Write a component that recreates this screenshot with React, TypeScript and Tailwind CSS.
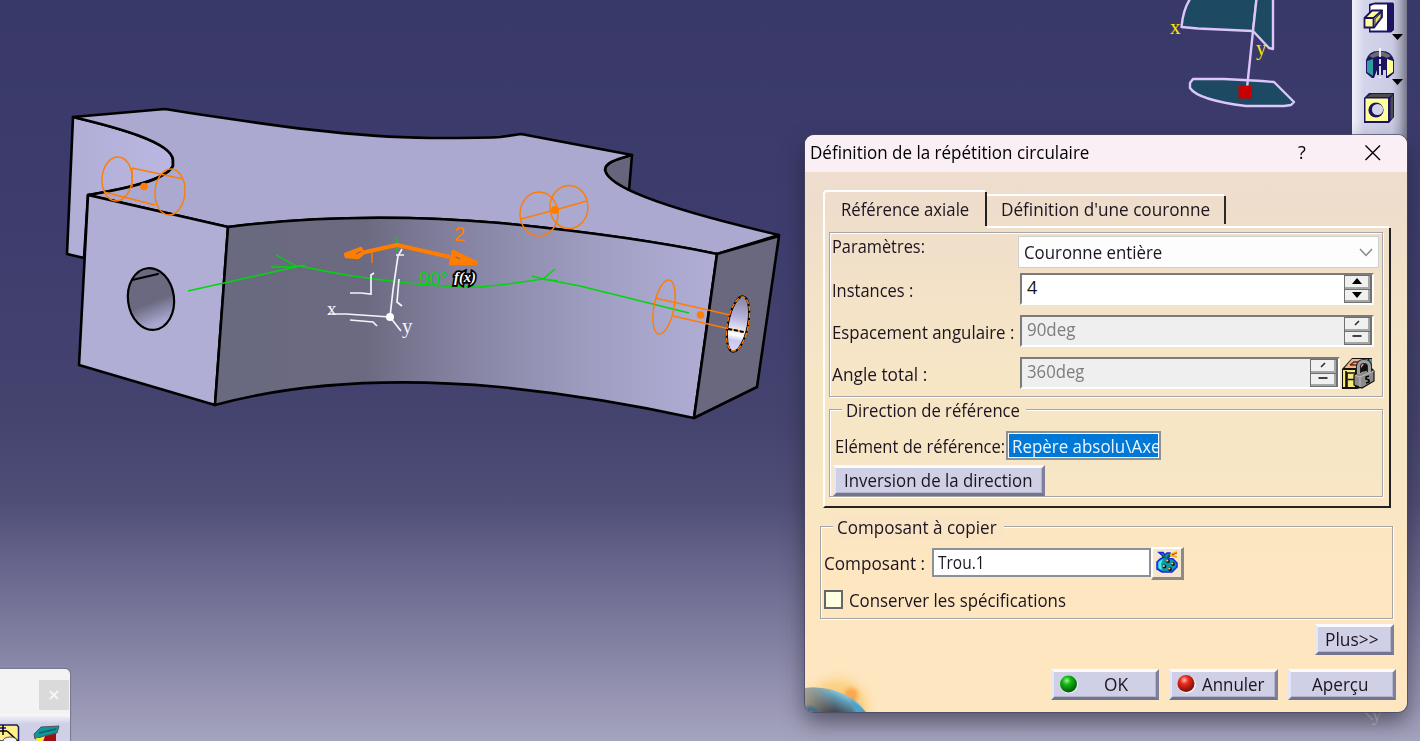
import type { ReactNode } from "react";

function T({ children, className = "" }: { children: ReactNode; className?: string }) {
  return (
    <span className={"inline-block origin-left whitespace-pre text-[18px] leading-[24px] " + className}>{children}</span>
  );
}

const ETCHED = "border border-[#a6a6a8] shadow-[1px_1px_0_#fff,inset_1px_1px_0_#fff]";

function SceneView() {
  return (
    <svg className="absolute inset-0" width="1420" height="741" viewBox="0 0 1420 741" fill="none">
      <defs>
        <linearGradient id="front" gradientUnits="userSpaceOnUse" x1="215" y1="0" x2="717" y2="0">
          <stop offset="0" stopColor="#69697f" />
          <stop offset="0.3" stopColor="#6b6a81" />
          <stop offset="0.42" stopColor="#7c7a96" />
          <stop offset="0.6" stopColor="#918fb0" />
          <stop offset="0.8" stopColor="#a3a1c5" />
          <stop offset="1" stopColor="#b0aed6" />
        </linearGradient>
        <linearGradient id="bore" x1="0.4" y1="0" x2="0.6" y2="1">
          <stop offset="0.55" stopColor="#6a6980" />
          <stop offset="0.9" stopColor="#a9a7cf" />
        </linearGradient>
        <linearGradient id="boreR" x1="0" y1="0" x2="0" y2="1">
          <stop offset="0" stopColor="#85839f" />
          <stop offset="0.4" stopColor="#b8b5df" />
          <stop offset="0.7" stopColor="#ffffff" />
          <stop offset="0.8" stopColor="#c9c6ee" />
          <stop offset="1" stopColor="#dcdaf8" />
        </linearGradient>
        <linearGradient id="side" x1="0" y1="0" x2="1" y2="0">
          <stop offset="0" stopColor="#b0aed5" />
          <stop offset="1" stopColor="#bab7e2" />
        </linearGradient>
      </defs>

      <g stroke="#000" strokeWidth="2.6" strokeLinejoin="round" strokeLinecap="round">
        <path fill="url(#side)" d="M73 117C115 127 172 142 173 160V166Q165 182 88 195L84 258L67 254Z" />
        <path fill="#66657c" d="M632 155C615 159 605 163 605 170C607 178 616 185 629 191Z" />
        <path fill="#aba9cf" d="M73 117L165 109L190 113C270 125 350 137 430 138C465 138 490 138 500 137L521 134L632 155C614 160 605 163 605 170C608 185 650 205 779 235L717 254C650 240 580 231 500 223C430 217 330 214 228 227L88 195C130 188 165 180 173 166V160C172 142 115 127 73 117Z" />
        <path fill="#b0aed5" d="M88 195L228 227L215 405L79 365Z" />
        <path fill="url(#front)" d="M228 227C330 214 430 217 500 223C580 231 650 240 717 254L694 418C630 404 570 394 500 387C400 378 300 382 215 405Z" />
        <path fill="#69687f" d="M717 254L779 236L757 387L694 418Z" />
        <ellipse cx="151" cy="299" rx="23" ry="31" transform="rotate(-7 151 299)" fill="url(#bore)" strokeWidth="2.2" />
        <path d="M132 280L158 274" strokeWidth="2.2" />
        <ellipse cx="738" cy="324" rx="10" ry="28" transform="rotate(11 738 324)" fill="url(#boreR)" strokeWidth="2.2" />
      </g>

      <g stroke="#00d60c" strokeWidth="1.4">
        <path d="M188 291L224 283L300 266C340 275 370 279 400 282C430 286 455 287 480 287L508 284L543 279L580 286L689 313" />
        <path d="M276 255L296 266M271 267H290L305 265.500M532 276L543 279L555 269M543 279L558 281" />
        <path d="M397 238V252" />
      </g>

      <g stroke="#ff7d00" strokeWidth="1.4">
        <ellipse cx="117" cy="179" rx="15" ry="22" transform="rotate(4 117 179)" />
        <ellipse cx="170" cy="192" rx="15" ry="23" transform="rotate(4 170 192)" />
        <path d="M132 168V187M132 168L183 179M104 192L155 205" />
        <ellipse cx="539" cy="214" rx="19" ry="22" />
        <ellipse cx="569" cy="207" rx="19" ry="21.500" />
        <path d="M521 219L555 210L587 201" />
        <ellipse cx="664" cy="307" rx="10" ry="27.500" transform="rotate(11 664 307)" />
        <path d="M655 298L730 315M673 316L743 332" />
        <ellipse cx="738" cy="324" rx="10.500" ry="27.500" transform="rotate(11 738 324)" strokeDasharray="5 2" />
        <path d="M728 329L744 332" stroke="#000" strokeDasharray="4 2" strokeWidth="2" />
        <path d="M372 250V263" />
      </g>
      <g fill="#ff7d00">
        <circle cx="144" cy="186.500" r="3.800" />
        <circle cx="555" cy="210" r="4" />
        <circle cx="700.500" cy="315" r="3.800" />
      </g>
      <g stroke="#ff7d00" strokeLinejoin="round">
        <path d="M361 253L397 245L450 257" strokeWidth="4" />
        <path d="M346 257L345 254L361 248L363 254L358 258Z" strokeWidth="2.500" fill="#ff7d00" />
        <path d="M453 251L476 262V264H450Z" strokeWidth="2.500" fill="#ff7d00" />
        <path d="M356 254L361 251.500M456 257L460 259" stroke="#6d6c84" strokeWidth="1.300" />
      </g>

      <g stroke="#f4f4fa" strokeWidth="1.700">
        <path d="M390 317L393 290L398 256L402 249M396 255H404" />
        <path d="M328 314H346L390 317L401 331" />
        <path d="M350 293H361L371 294V275L374 273M350 320L373 322L377 326M399 279L397 302L402 306" />
      </g>
      <circle cx="390" cy="317" r="4" fill="#fff" />
      <g fontFamily="'Liberation Sans', sans-serif">
        <text x="454" y="241" fontSize="20" fill="#ff7d00">2</text>
        <text x="419" y="285" fontSize="19" fill="#00d60c">90°</text>
      </g>
      <g fontFamily="'Liberation Serif', serif" fill="#f4f4fa">
        <text x="327" y="315" fontSize="19">x</text>
        <text x="402" y="333" fontSize="21">y</text>
        <text x="1372" y="721" fontSize="19" fill="#c8c8ce">y</text>
      </g>
      <path d="M1365 712L1373 720" stroke="#c8c8ce" strokeWidth="1.400" />
      <text x="454" y="282" fontSize="15" fontWeight="bold" fontStyle="italic" fontFamily="'Liberation Serif', serif" fill="#fff" stroke="#000" strokeWidth="3.600" paintOrder="stroke" textLength="22" lengthAdjust="spacingAndGlyphs">f(x)</text>

      <g stroke="#dcc6fa" strokeWidth="2.400" fill="#1d4a62" strokeLinejoin="round">
        <path d="M1190 -1Q1183 10 1181.500 27L1198 28.500L1253 31L1256.500 -1" />
        <path d="M1256.500 -1L1253 31L1269 48L1273 49V-1" />
        <path d="M1193 79L1224 79L1262 81L1274 82L1294 102L1291 105L1284 106H1246Q1198 100 1190 88V83Z" />
        <path d="M1253 31L1247 88" />
      </g>
      <rect x="1238.500" y="85.500" width="13.500" height="13" fill="#c80000" />
      <g fontFamily="'Liberation Serif', serif" fill="#ffe400" fontSize="21">
        <text x="1170" y="34">x</text>
        <text x="1256" y="55">y</text>
      </g>
    </svg>
  );
}

function RightToolbar() {
  return (
    <div className="absolute left-[1352px] top-0 h-[140px] w-[55px] bg-[linear-gradient(90deg,#f2f2f8_0,#d4d4ea_12px,#cbcbe4_40px,#b0b0c4_47px,#77778c_55px)]">
      <svg width="55" height="140" viewBox="0 0 55 140">
        <path d="M17 4L23 2.500H41L42 4V30L39 32.500H17Z" fill="#1c1460" />
        <path d="M18.500 6L22 4.500H35V30.500H18.500Z" fill="#fff" />
        <path d="M12.500 18L20 10.500H30V17L22 27.500H12.500Z" fill="#ffff9a" stroke="#1c1460" strokeWidth="1.800" />
        <path d="M12.500 18H21.500V27M21.500 18L29.500 11" stroke="#1c1460" strokeWidth="1.800" fill="none" />
        <path d="M23 19L29 13V17L23 25Z" fill="#e4e06a" stroke="#1c1460" strokeWidth="0.800" />
        <path d="M40 34H51L45.500 40Z" fill="#000" />
        <path d="M14 60Q17 50 28 51Q39 50 42 60V73L36 78H34V70H31V75H25V70L22 78H20L14 73Z" fill="#1c1460" />
        <path d="M17 56Q28 47 39 56L35 58Q28 54 21 58Z" fill="#6b6b70" />
        <path d="M15 61L21 59V76L15 72Z" fill="#2f9d9e" />
        <path d="M35 59L41 61V72L35 76Z" fill="#ffff9a" />
        <path d="M28 48V78" stroke="#fff" strokeWidth="1.700" strokeDasharray="9 2 5 2" />
        <path d="M40 79H51L45.500 85Z" fill="#000" />
        <path d="M12 98L17 93H42V117L37 123H12Z" fill="#1c1460" />
        <path d="M15 97L19 94H41L37 97Z" fill="#4d4d50" />
        <path d="M38.500 98L41 95V117L38.500 120Z" fill="#4d4d50" />
        <path d="M13.500 98.500H36V121H13.500Z" fill="#ffff9a" />
        <circle cx="24" cy="110" r="7.600" fill="#1c1460" />
        <circle cx="25.500" cy="109.500" r="5.600" fill="#d3d3ea" />
      </svg>
    </div>
  );
}

function FloatingPalette() {
  return (
    <div className="absolute left-0 top-[669px] flex h-[80px] w-[70px] flex-col overflow-hidden rounded-tr-[5px] bg-[#f3f3f3] shadow-[0_0_1px_1px_#77778e]">
      <div className="flex h-[45px] justify-end pr-px pt-[11px]">
        <div className="flex h-[30px] w-[30px] items-center justify-center bg-[#dadada]">
          <svg width="10" height="10" viewBox="0 0 10 10"><path d="M1 1L9 9M9 1L1 9" stroke="#f6f6f6" strokeWidth="2" /></svg>
        </div>
      </div>
      <div className="h-[35px] bg-[linear-gradient(#fafafc,#cfcfe6_10px)]">
        <svg width="70" height="35" viewBox="0 714 70 35">
          <path d="M-2 725H17L18.500 727V741H-2Z" fill="#ffef86" stroke="#1b1b6b" strokeWidth="1.500" />
          <path d="M0 728H6" stroke="#1414d8" strokeWidth="1.500" />
          <path d="M3 725V735M0 731H7M7 731L18 741" stroke="#000" strokeWidth="1.500" />
          <ellipse cx="10" cy="741" rx="7" ry="4" fill="#f3f3f3" stroke="#555" />
          <path d="M45 736L56 732V742H43Z" fill="#a00f0f" />
          <path d="M34 734L41 727L59 726L57 733L44 736L35 739Z" fill="#10959b" stroke="#555" strokeWidth="1" />
          <path d="M36 738H44L41 742H38Z" fill="#ffef22" />
          <path d="M39 733L56 729" stroke="#0d5f66" strokeWidth="1.500" />
        </svg>
      </div>
    </div>
  );
}

function Spinner({ disabled = false }: { disabled?: boolean }) {
  const cell = "flex h-[13px] w-[25px] items-center justify-center border-b-2 border-r-2 border-[#a6a6a6] bg-[#f0f0f0]";
  return (
    <div className="flex h-[28px] w-[28px] flex-col gap-px border border-[#707070] bg-[#707070] shadow-[inset_-1px_-1px_0_#707070]">
      <div className={cell}>
        <svg width="12" height="8" viewBox="0 0 12 8">
          {disabled ? <path d="M4 6L8 2" stroke="#222" strokeWidth="1.500" /> : <path d="M1 7L6 1L11 7Z" fill="#000" />}
        </svg>
      </div>
      <div className={cell}>
        <svg width="12" height="8" viewBox="0 0 12 8">
          {disabled ? <path d="M1.500 3H10.500" stroke="#222" strokeWidth="1.700" /> : <path d="M1 1H11L6 7Z" fill="#000" />}
        </svg>
      </div>
    </div>
  );
}

function NumberField({ value, width, disabled = false, scale }: { value: string; width: string; disabled?: boolean; scale: string }) {
  return (
    <div className={"flex h-[32px] justify-between border-2 border-b-white border-l-[#7b7b7b] border-r-white border-t-[#7b7b7b] " + width + (disabled ? " bg-[#efefef] text-[#7d7d7d]" : " bg-white")}>
      <div className="pl-[5px]"><T className={scale}>{value}</T></div>
      <Spinner disabled={disabled} />
    </div>
  );
}

function Bevel({ className = "", children }: { className?: string; children: ReactNode }) {
  return (
    <div className={"flex h-[31px] border-[3px] border-b-[#74748f] border-l-[#e6e6fa] border-r-[#80809c] border-t-[#fbfbff] bg-[#cfcfe5] shadow-[inset_-1px_-1px_0_#b4b4cd] " + className}>
      {children}
    </div>
  );
}

function LockIcon() {
  return (
    <svg width="34" height="33" viewBox="0 0 34 33">
      <path d="M1 12L11 1H31V20L20 31L16 32H1Z" fill="#111" />
      <path d="M2 13H14V30H2Z" fill="#f7ea7c" />
      <path d="M3.500 11L11 2H27L20 11Z" fill="#f2b48f" />
      <path d="M9 8L13 5H22M9 8H17" stroke="#5b2b1a" strokeWidth="1.500" fill="none" />
      <path d="M5 14V30M14 16H6V30M7 22.500H13" stroke="#111" strokeWidth="1.600" fill="none" />
      <path d="M28 2H31V8L28 5Z" fill="#24a7b8" />
      <path d="M13 18L18 15L31 12L33 14V24L21 31L13 28Z" fill="#8b8b8b" stroke="#111" strokeWidth="1.200" />
      <path d="M17.500 16V9Q18 4.500 23 4.500Q28 4.500 28.500 9V15" fill="none" stroke="#222" strokeWidth="5" />
      <path d="M17.500 17V9Q18 4.500 23 4.500Q28 4.500 28.500 9V15" fill="none" stroke="#9f9f9f" strokeWidth="3" />
      <path d="M14 18.500L19 20L33 14M19 20V30" stroke="#bdbdbd" strokeWidth="1" fill="none" />
      <path d="M28 19L25 20V22L28 23V25L25 26" stroke="#000" strokeWidth="1.500" fill="none" />
    </svg>
  );
}

function BagIcon() {
  return (
    <svg width="24" height="24" viewBox="0 0 24 24">
      <path d="M4 1.500H8L10 4L12 2H15V5L13 7L18 8L22 12V16L17 21H7L2 18V11L5 8L9 6Z" fill="#0d9aa6" stroke="#1226e8" strokeWidth="1.500" />
      <path d="M3.500 11L8 8L6 13L7 19L3.500 17Z" fill="#4fe6fa" />
      <path d="M15 4L22 1M15 4L22 6" stroke="#f2b40a" strokeWidth="2" />
      <path d="M17 4L22 2" stroke="#d42a0a" strokeWidth="1" />
      <path d="M7 5L11 7M14 4L12 7" stroke="#1f5f16" strokeWidth="1.500" />
      <g fill="#111">
        <circle cx="13" cy="10" r="1.900" /><circle cx="18" cy="13" r="1.900" /><circle cx="9.500" cy="15.500" r="1.900" /><circle cx="15" cy="18" r="1.900" />
      </g>
      <g fill="#f3c89c">
        <circle cx="12.300" cy="9.500" r="1.100" /><circle cx="17.300" cy="12.500" r="1.100" /><circle cx="8.800" cy="15" r="1.100" /><circle cx="14.300" cy="17.500" r="1.100" />
      </g>
    </svg>
  );
}

function Dialog() {
  return (
    <div className="absolute left-[805px] top-[135px] flex h-[577px] w-[602px] flex-col overflow-hidden rounded-[9px] bg-[linear-gradient(#efdecf_37px,#eeddcb_70px,#f3e2c8_150px,#f6e6c6_230px,#f7e6c6_330px,#fde6c0_430px,#fde7c1)] text-[#1c1420]">
      <div className="flex h-[37px] shrink-0 bg-[#f9eff4] pt-[5px] text-black">
        <div className="w-[488px] pl-[5px]"><T className="scale-x-[0.945]">Définition de la répétition circulaire</T></div>
        <div className="w-[71px] pl-[5px]"><T className="scale-x-[0.95] text-[19px]">?</T></div>
        <svg className="mt-[4px]" width="18" height="18" viewBox="0 0 18 18"><path d="M1.500 1.500L16 16M16 1.500L1.500 16" stroke="#000" strokeWidth="1.400" /></svg>
      </div>

      <div className="ml-[18px] mt-[18px] flex h-[36px] shrink-0 items-end">
        <div className="flex h-[36px] w-[162px] rounded-tl-[4px] border-l-2 border-t-2 border-white pl-[16px] pt-[5px]">
          <T className="scale-x-[0.93]">Référence axiale</T>
        </div>
        <div className="h-[34px] w-[2px] bg-[#222]" />
        <div className="h-[32px] w-[237px] border-t-2 border-white pl-[14px] pt-px">
          <T className="scale-x-[0.953]">Définition d'une couronne</T>
        </div>
        <div className="mb-[2px] h-[28px] w-[2px] bg-[#2a2a2a]" />
      </div>

      <div className="ml-[18px] flex h-[282px] w-[568px] shrink-0">
        <div className="flex w-[566px] flex-col border-b-2 border-l-2 border-b-[#222] border-l-white">
          <div className="ml-[162px] h-[2px] shrink-0 bg-white" />
          <div className={"ml-[4px] mt-[4px] flex h-[165px] w-[554px] shrink-0 " + ETCHED}>
            <div className="flex w-[188px] flex-col pl-[2px] pt-px">
              <div className="h-[44px]"><T className="scale-x-[0.91]">Paramètres:</T></div>
              <div className="h-[42px]"><T className="scale-x-[0.915]">Instances :</T></div>
              <div className="h-[42px]"><T className="scale-x-[0.935]">Espacement angulaire :</T></div>
              <T className="scale-x-[0.96]">Angle total :</T>
            </div>
            <div className="flex flex-col pt-[3px]">
              <div className="flex h-[32px] w-[361px] items-center justify-between border border-[#cfcfcf] bg-[#fdfdfd] pl-[5px] pr-[5px]">
                <T className="scale-x-[0.935]">Couronne entière</T>
                <svg width="14" height="9" viewBox="0 0 14 9"><path d="M1 1L7 7.500L13 1" fill="none" stroke="#8a8a8a" strokeWidth="1.500" /></svg>
              </div>
              <div className="mt-[5px] flex flex-col gap-[10px] pl-[2px]">
                <NumberField value="4" width="w-[354px]" scale="scale-x-100" />
                <NumberField value="90deg" width="w-[354px]" scale="scale-x-[0.94]" disabled />
                <div className="flex h-[32px] gap-px">
                  <NumberField value="360deg" width="w-[320px]" scale="scale-x-[0.93]" disabled />
                  <LockIcon />
                </div>
              </div>
            </div>
          </div>
          <fieldset className={"relative ml-[4px] mt-[12px] h-[88px] w-[554px] shrink-0 " + ETCHED}>
            <div className="absolute left-[12px] top-[-12px] h-[24px] w-[184px] bg-[#f6e6c6] pl-[4px]">
              <T className="scale-x-[0.926]">Direction de référence</T>
            </div>
            <div className="flex h-[29px] pl-[5px]">
              <div className="h-[29px] w-[171px] pt-[24px]"><T className="scale-x-[0.92]">Elément de référence:</T></div>
              <div className="mt-[21px] h-[29px] w-[155px] shrink-0 border-2 border-[#8c9097] bg-white p-px">
                <div className="h-[23px] overflow-hidden bg-[#0078d7] pl-[3px] text-[#eaf4ff]"><T className="scale-x-[0.94]">Repère absolu\Axe</T></div>
              </div>
            </div>
            <Bevel className="ml-[3px] mt-[26px] w-[212px] pl-[8px]"><T className="scale-x-[0.935]">Inversion de la direction</T></Bevel>
          </fieldset>
        </div>
        <div className="mt-[2px] w-[2px] bg-[#222]" />
      </div>

      <div className={"relative ml-[15px] mt-[18px] h-[93px] w-[573px] shrink-0 " + ETCHED}>
        <div className="absolute left-[12px] top-[-12px] h-[24px] w-[171px] bg-[#f9e5c3] pl-[4px]">
          <T className="scale-x-[0.947]">Composant à copier</T>
        </div>
        <div className="flex h-[63px] pl-[3px] pt-[21px]">
          <div className="w-[108px] pt-[3px]"><T className="scale-x-[0.953]">Composant :</T></div>
          <div className="h-[29px] w-[219px] border-2 border-[#8c9097] bg-white pl-[4px]"><T className="scale-x-[0.86]">Trou.1</T></div>
          <div className="-mt-px flex h-[33px] w-[33px] items-center justify-center border-b-[3px] border-l-2 border-r-[3px] border-t-2 border-b-[#8b8b88] border-l-white border-r-[#8b8b88] border-t-white bg-[#f7e6cc]">
            <BagIcon />
          </div>
        </div>
        <div className="flex pl-[3px]">
          <div className="h-[19px] w-[19px] border-2 border-[#666] bg-[#ffffe1]" />
          <T className="-mt-[2px] ml-[6px] scale-x-[0.936]">Conserver les spécifications</T>
        </div>
      </div>

      <div className="mt-[5px] flex shrink-0 justify-end pr-[13px]">
        <Bevel className="w-[79px] pl-[7px]"><T className="scale-x-[0.965]">{"Plus>>"}</T></Bevel>
      </div>

      <div className="mt-[14px] flex h-[47px] shrink-0">
        <svg className="-mt-[10px] shrink-0" width="246" height="57" viewBox="0 655 246 57">
          <defs>
            <radialGradient id="glow" gradientUnits="userSpaceOnUse" cx="32" cy="706" r="44">
              <stop offset="0.300" stopColor="#fbc873" />
              <stop offset="0.600" stopColor="#fbd48c" />
              <stop offset="1" stopColor="#fde7c1" stopOpacity="0" />
            </radialGradient>
            <radialGradient id="flare" gradientUnits="userSpaceOnUse" cx="46" cy="691" r="11">
              <stop offset="0.400" stopColor="#fca850" />
              <stop offset="1" stopColor="#fbc873" stopOpacity="0" />
            </radialGradient>
            <linearGradient id="planet" gradientUnits="userSpaceOnUse" x1="36" y1="686" x2="24" y2="712">
              <stop offset="0" stopColor="#a2dcf2" />
              <stop offset="0.300" stopColor="#5f9db8" />
              <stop offset="0.650" stopColor="#4d5c66" />
              <stop offset="1" stopColor="#24282c" />
            </linearGradient>
            <linearGradient id="haze" gradientUnits="userSpaceOnUse" x1="0" y1="0" x2="30" y2="0">
              <stop offset="0" stopColor="#b3aa98" stopOpacity="0.850" />
              <stop offset="1" stopColor="#b3aa98" stopOpacity="0" />
            </linearGradient>
            <filter id="cloud" x="-20%" y="-20%" width="140%" height="140%"><feGaussianBlur stdDeviation="1.5" /></filter>
          </defs>
          <rect x="0" y="655" width="90" height="57" fill="url(#glow)" />
          <circle cx="46" cy="691" r="11" fill="url(#flare)" />
          <path d="M0 684Q40 680 64 712H0Z" fill="url(#planet)" />
          <path d="M0 684Q40 680 64 712H0Z" fill="url(#haze)" />
          <path d="M2 702Q12 702 18 712H0Z" fill="#3c6f8c" filter="url(#cloud)" />
          <path d="M44 693Q54 699 61 711H50Q50 702 44 693Z" fill="#4ba3cf" filter="url(#cloud)" />
        </svg>
        <div className="flex gap-[10px]">
          <Bevel className="w-[108px]">
            <svg className="ml-[4px] mr-[26px] mt-[2px]" width="20" height="20" viewBox="0 0 20 20">
              <defs><radialGradient id="ok" cx="0.4" cy="0.3" r="0.7"><stop offset="0" stopColor="#9df59a" /><stop offset="0.35" stopColor="#12b812" /><stop offset="1" stopColor="#03590b" /></radialGradient></defs>
              <circle cx="11" cy="10.500" r="9" fill="#eeeefa" /><circle cx="10.500" cy="10" r="8.500" fill="url(#ok)" />
            </svg>
            <T className="scale-x-[0.96]">OK</T>
          </Bevel>
          <Bevel className="w-[109px]">
            <svg className="ml-[4px] mr-[6px] mt-[2px]" width="20" height="20" viewBox="0 0 20 20">
              <defs><radialGradient id="ko" cx="0.4" cy="0.3" r="0.7"><stop offset="0" stopColor="#ffc0b0" /><stop offset="0.35" stopColor="#ea2a1c" /><stop offset="1" stopColor="#7a0d06" /></radialGradient></defs>
              <circle cx="11" cy="10.500" r="9" fill="#eeeefa" /><circle cx="10" cy="9.500" r="8.500" fill="url(#ko)" />
            </svg>
            <T className="scale-x-[0.94]">Annuler</T>
          </Bevel>
          <Bevel className="w-[108px] pl-[21px]"><T className="scale-x-[0.95]">Aperçu</T></Bevel>
        </div>
      </div>
    </div>
  );
}

export default function App() {
  return (
    <div className="relative h-[741px] w-[1420px] overflow-hidden bg-[linear-gradient(#393969_0%,#3d3c6d_30%,#45446f_57%,#504f78_68%,#8684a5_88%,#a5a4be_100%)] font-['Open_Sans',sans-serif]">
      <SceneView />
      <RightToolbar />
      <div className="absolute left-[805px] top-[135px] h-[577px] w-[602px] rounded-[9px] shadow-[0_0_0_1px_rgba(70,70,95,0.7),0_10px_22px_rgba(30,28,40,0.55)]" />
      <FloatingPalette />
      <Dialog />
    </div>
  );
}
